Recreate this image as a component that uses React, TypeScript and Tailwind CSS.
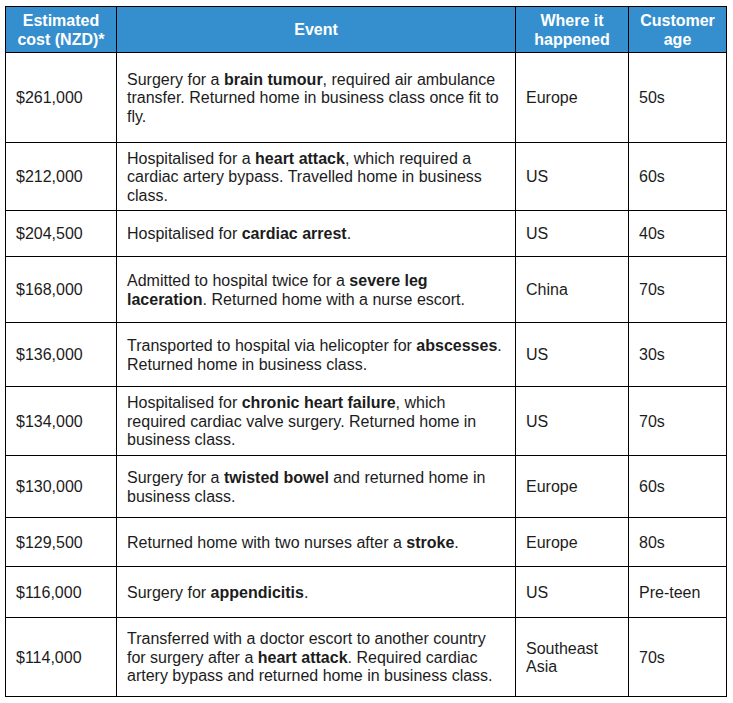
import { Fragment, type ReactNode } from "react";

type Row = { cost: string; lines: ReactNode[]; where: ReactNode; age: string; h: string };

const rows: Row[] = [
  {
    cost: "$261,000",
    lines: [
      <>Surgery for a <b>brain tumour</b>, required air ambulance</>,
      "transfer. Returned home in business class once fit to",
      "fly.",
    ],
    where: "Europe",
    age: "50s",
    h: "h-[90px]",
  },
  {
    cost: "$212,000",
    lines: [
      <>Hospitalised for a <b>heart attack</b>, which required a</>,
      "cardiac artery bypass. Travelled home in business",
      "class.",
    ],
    where: "US",
    age: "60s",
    h: "h-[68px]",
  },
  {
    cost: "$204,500",
    lines: [<>Hospitalised for <b>cardiac arrest</b>.</>],
    where: "US",
    age: "40s",
    h: "h-[46px]",
  },
  {
    cost: "$168,000",
    lines: [
      <>Admitted to hospital twice for a <b>severe leg</b></>,
      <><b>laceration</b>. Returned home with a nurse escort.</>,
    ],
    where: "China",
    age: "70s",
    h: "h-[66px]",
  },
  {
    cost: "$136,000",
    lines: [
      <>Transported to hospital via helicopter for <b>abscesses</b>.</>,
      "Returned home in business class.",
    ],
    where: "US",
    age: "30s",
    h: "h-[64px]",
  },
  {
    cost: "$134,000",
    lines: [
      <>Hospitalised for <b>chronic heart failure</b>, which</>,
      "required cardiac valve surgery. Returned home in",
      "business class.",
    ],
    where: "US",
    age: "70s",
    h: "h-[69px]",
  },
  {
    cost: "$130,000",
    lines: [<>Surgery for a <b>twisted bowel</b> and returned home in</>, "business class."],
    where: "Europe",
    age: "60s",
    h: "h-[62px]",
  },
  {
    cost: "$129,500",
    lines: [<>Returned home with two nurses after a <b>stroke</b>.</>],
    where: "Europe",
    age: "80s",
    h: "h-[49px]",
  },
  {
    cost: "$116,000",
    lines: [<>Surgery for <b>appendicitis</b>.</>],
    where: "US",
    age: "Pre-teen",
    h: "h-[51px]",
  },
  {
    cost: "$114,000",
    lines: [
      "Transferred with a doctor escort to another country",
      <>for surgery after a <b>heart attack</b>. Required cardiac</>,
      "artery bypass and returned home in business class.",
    ],
    where: (
      <>
        Southeast
        <br />
        Asia
      </>
    ),
    age: "70s",
    h: "h-[79px]",
  },
];

export default function App() {
  return (
    <div className="min-h-screen bg-white pl-[5px] pt-[6px] font-['Liberation_Sans',Arial,sans-serif] text-[16px] leading-[18.5px] text-[#1c1c1c]">
      <table className="w-[721px] table-fixed border-collapse border border-black">
        <colgroup>
          <col className="w-[111px]" />
          <col className="w-[399px]" />
          <col className="w-[113px]" />
          <col className="w-[98px]" />
        </colgroup>
        <thead>
          <tr className="h-[46px] bg-[#358fce] font-bold text-white">
            <th className="border border-black px-1 pt-[2px] text-center">
              Estimated
              <br />
              cost (NZD)*
            </th>
            <th className="border border-black px-1 pt-[2px] text-center">Event</th>
            <th className="border border-black px-1 pt-[2px] text-center">
              Where it
              <br />
              happened
            </th>
            <th className="border border-black px-1 pt-[2px] text-center">
              Customer
              <br />
              age
            </th>
          </tr>
        </thead>
        <tbody>
          {rows.map((r) => (
            <tr key={r.cost} className={r.h}>
              <td className="border border-black px-[10px] pt-[2px] align-middle">{r.cost}</td>
              <td className="whitespace-nowrap border border-black px-[10px] pt-[2px] align-middle">
                {r.lines.map((l, i) => (
                  <Fragment key={i}>
                    {i > 0 && <br />}
                    {l}
                  </Fragment>
                ))}
              </td>
              <td className="border border-black px-[10px] pt-[2px] align-middle">{r.where}</td>
              <td className="border border-black px-[10px] pt-[2px] align-middle">{r.age}</td>
            </tr>
          ))}
        </tbody>
      </table>
    </div>
  );
}
